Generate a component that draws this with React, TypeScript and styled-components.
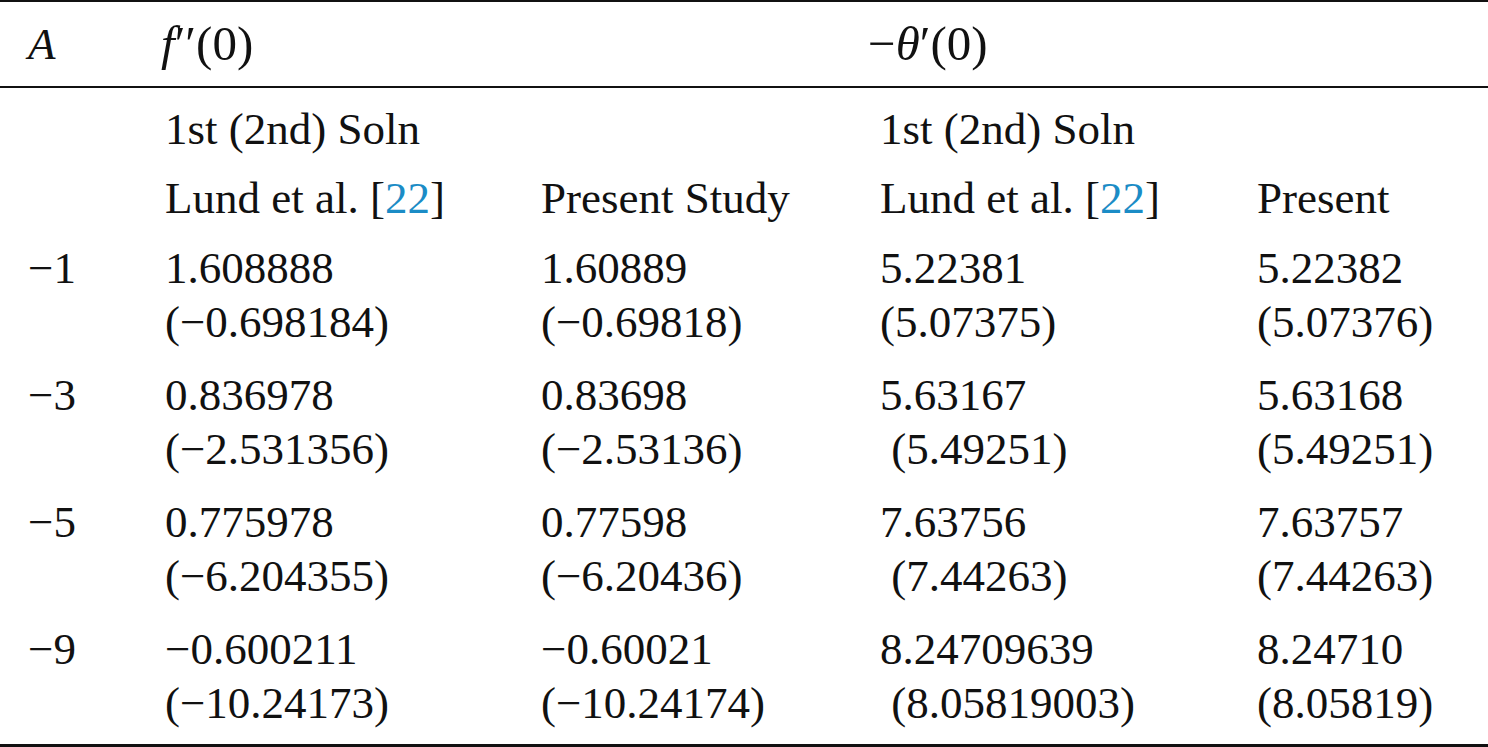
import styled, { createGlobalStyle } from 'styled-components';

const GlobalStyle = createGlobalStyle`
  html, body {
    margin: 0;
    padding: 0;
    background: #ffffff;
  }
  body {
    font-family: 'Liberation Serif', 'Times New Roman', serif;
    color: #111111;
  }
`;

const Table = styled.table`
  width: 1488px;
  border-collapse: collapse;
  table-layout: fixed;
  font-size: 45px;
  line-height: 54px;
  border-top: 2px solid #111111;
  border-bottom: 3px solid #111111;
`;

const HeadRow = styled.tr`
  border-bottom: 2px solid #111111;
`;

const HeadCell = styled.th<{ $first?: boolean }>`
  text-align: left;
  font-weight: normal;
  vertical-align: top;
  padding: 15px 0 14px ${p => (p.$first ? '28px' : '0')};
  white-space: pre;
`;

const Cell = styled.td<{ $first?: boolean; $top: number; $bottom: number }>`
  vertical-align: top;
  padding: ${p => p.$top}px 0 ${p => p.$bottom}px ${p => (p.$first ? '28px' : '0')};
  white-space: pre;
`;

const Line = styled.div`
  display: block;
`;

const MathText = styled.span<{ $shift?: number }>`
  display: inline-block;
  font-size: 49px;
  margin-left: ${p => p.$shift ?? 0}px;
`;

const Italic = styled.i`
  font-style: italic;
`;

const Ref = styled.span`
  color: #1b8cc6;
`;

const Lund = () => (
  <>
    Lund et al. [<Ref>22</Ref>]
  </>
);

type DataRow = {
  a: string;
  cells: [string, string][];
};

const rows: DataRow[] = [
  {
    a: '\u22121',
    cells: [
      ['1.608888', '(\u22120.698184)'],
      ['1.60889', '(\u22120.69818)'],
      ['5.22381', '(5.07375)'],
      ['5.22382', '(5.07376)'],
    ],
  },
  {
    a: '\u22123',
    cells: [
      ['0.836978', '(\u22122.531356)'],
      ['0.83698', '(\u22122.53136)'],
      ['5.63167', ' (5.49251)'],
      ['5.63168', '(5.49251)'],
    ],
  },
  {
    a: '\u22125',
    cells: [
      ['0.775978', '(\u22126.204355)'],
      ['0.77598', '(\u22126.20436)'],
      ['7.63756', ' (7.44263)'],
      ['7.63757', '(7.44263)'],
    ],
  },
  {
    a: '\u22129',
    cells: [
      ['\u22120.600211', '(\u221210.24173)'],
      ['\u22120.60021', '(\u221210.24174)'],
      ['8.24709639', ' (8.05819003)'],
      ['8.24710', '(8.05819)'],
    ],
  },
];

const App = () => {
  return (
    <>
      <GlobalStyle />
      <Table>
        <colgroup>
          <col style={{ width: 165 }} />
          <col style={{ width: 376 }} />
          <col style={{ width: 339 }} />
          <col style={{ width: 377 }} />
          <col style={{ width: 231 }} />
        </colgroup>
        <thead>
          <HeadRow>
            <HeadCell $first>
              <Italic>A</Italic>
            </HeadCell>
            <HeadCell>
              <MathText $shift={-4}>
                <Italic>f</Italic>
                {'\u2032\u2032(0)'}
              </MathText>
            </HeadCell>
            <HeadCell />
            <HeadCell>
              <MathText $shift={-12}>
                {'\u2212'}
                <Italic>θ</Italic>
                {'\u2032(0)'}
              </MathText>
            </HeadCell>
            <HeadCell />
          </HeadRow>
        </thead>
        <tbody>
          <tr>
            <Cell $first $top={14} $bottom={7} />
            <Cell $top={14} $bottom={7}>1st (2nd) Soln</Cell>
            <Cell $top={14} $bottom={7} />
            <Cell $top={14} $bottom={7}>1st (2nd) Soln</Cell>
            <Cell $top={14} $bottom={7} />
          </tr>
          <tr>
            <Cell $first $top={8} $bottom={8} />
            <Cell $top={8} $bottom={8}>
              <Lund />
            </Cell>
            <Cell $top={8} $bottom={8}>Present Study</Cell>
            <Cell $top={8} $bottom={8}>
              <Lund />
            </Cell>
            <Cell $top={8} $bottom={8}>Present</Cell>
          </tr>
          {rows.map((row, i) => {
            const bottom = i === rows.length - 1 ? 14 : 11;
            return (
              <tr key={row.a}>
                <Cell $first $top={8} $bottom={bottom}>
                  {row.a}
                </Cell>
                {row.cells.map(([first, second], j) => (
                  <Cell key={j} $top={8} $bottom={bottom}>
                    <Line>{first}</Line>
                    <Line>{second}</Line>
                  </Cell>
                ))}
              </tr>
            );
          })}
        </tbody>
      </Table>
    </>
  );
};

export default App;
